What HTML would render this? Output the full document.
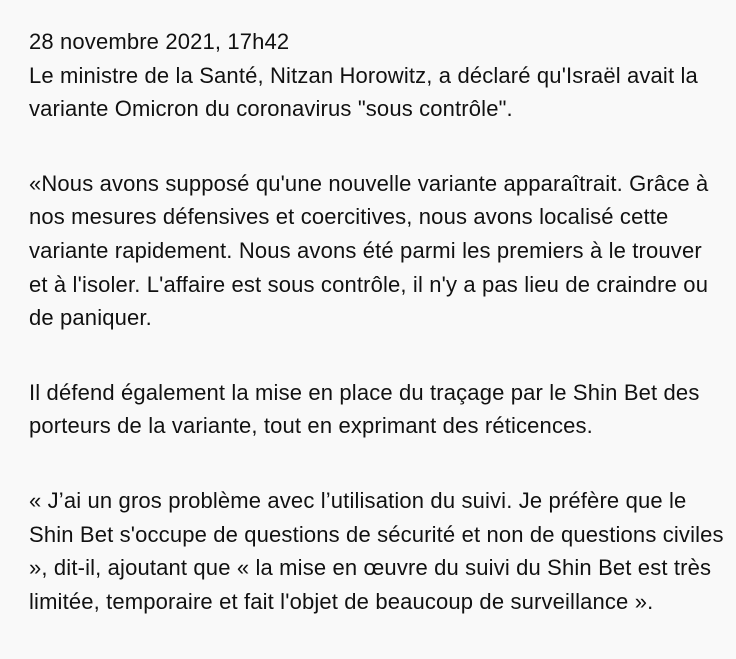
<!DOCTYPE html>
<html><head><meta charset="utf-8"><style>
html,body{margin:0;padding:0;background:#f9f9f9;width:736px;height:638px;overflow:hidden}
.c{position:absolute;left:29px;top:25px;font-family:"Liberation Sans",sans-serif;font-size:22px;line-height:33.6px;color:#111;white-space:nowrap;letter-spacing:0.15px}
p{margin:0 0 41px 0}
</style></head><body><div class="c">
<p>28 novembre 2021, 17h42<br>Le ministre de la Santé, Nitzan Horowitz, a déclaré qu'Israël avait la<br>variante Omicron du coronavirus "sous contrôle".</p>
<p>«Nous avons supposé qu'une nouvelle variante apparaîtrait. Grâce à<br>nos mesures défensives et coercitives, nous avons localisé cette<br>variante rapidement. Nous avons été parmi les premiers à le trouver<br>et à l'isoler. L'affaire est sous contrôle, il n'y a pas lieu de craindre ou<br>de paniquer.</p>
<p>Il défend également la mise en place du traçage par le Shin Bet des<br>porteurs de la variante, tout en exprimant des réticences.</p>
<p>« J’ai un gros problème avec l’utilisation du suivi. Je préfère que le<br>Shin Bet s'occupe de questions de sécurité et non de questions civiles<br>», dit-il, ajoutant que « la mise en œuvre du suivi du Shin Bet est très<br>limitée, temporaire et fait l'objet de beaucoup de surveillance ».</p>
</div></body></html>
